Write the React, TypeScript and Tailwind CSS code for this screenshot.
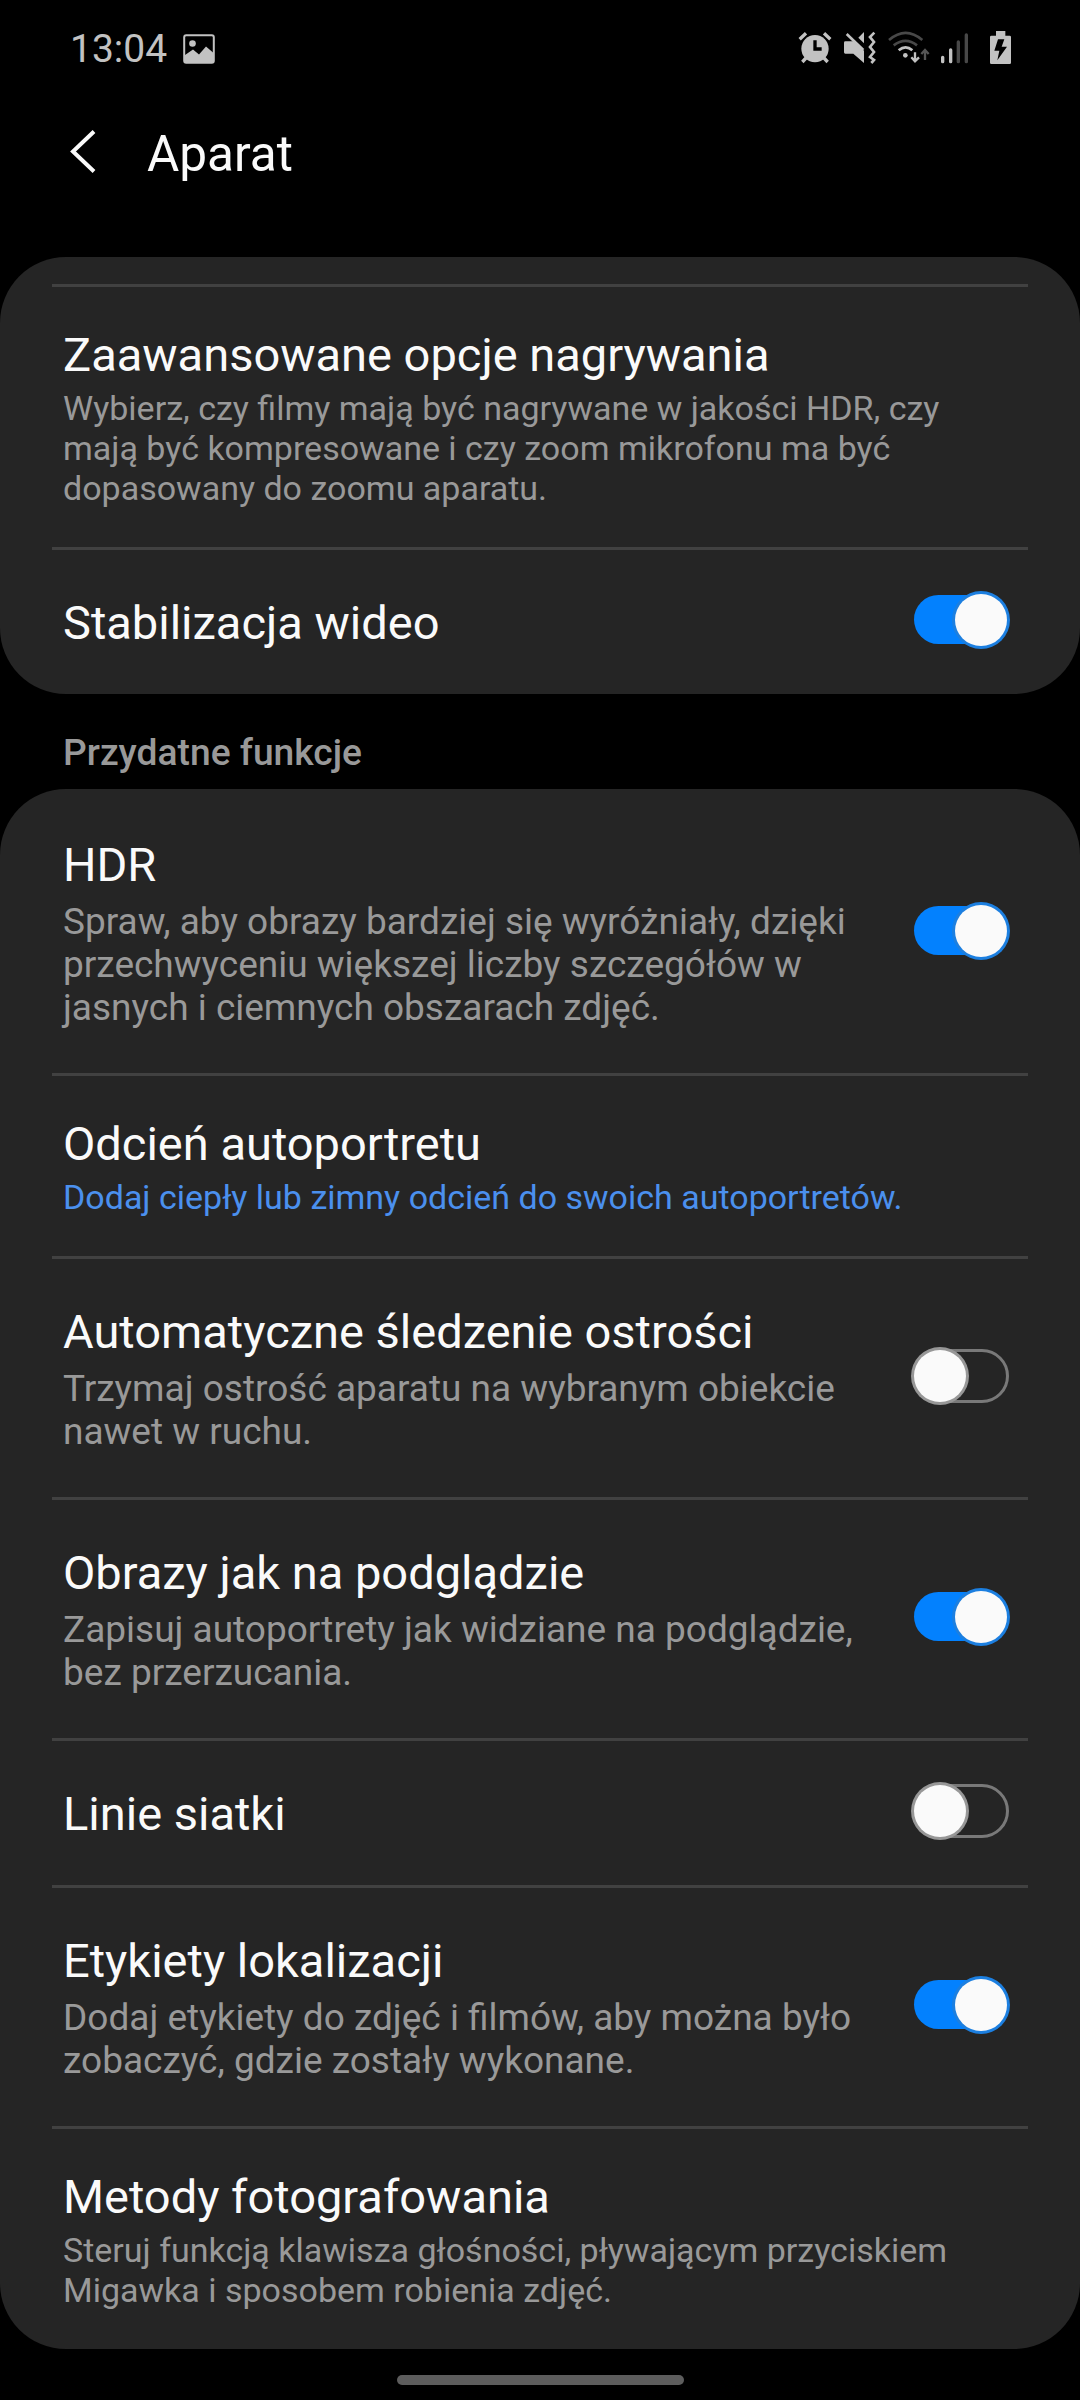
import { useState } from 'react'
import { clsx } from 'clsx'

type Item = {
  id: string
  title: string
  lines?: string[]
  accent?: boolean
  on?: boolean
}

const videoItems: Item[] = [
  {
    id: 'recording',
    title: 'Zaawansowane opcje nagrywania',
    lines: [
      'Wybierz, czy filmy mają być nagrywane w jakości HDR, czy',
      'mają być kompresowane i czy zoom mikrofonu ma być',
      'dopasowany do zoomu aparatu.',
    ],
  },
  { id: 'stabilization', title: 'Stabilizacja wideo', on: true },
]

const usefulItems: Item[] = [
  {
    id: 'hdr',
    title: 'HDR',
    lines: [
      'Spraw, aby obrazy bardziej się wyróżniały, dzięki',
      'przechwyceniu większej liczby szczegółów w',
      'jasnych i ciemnych obszarach zdjęć.',
    ],
    on: true,
  },
  {
    id: 'selfie-tone',
    title: 'Odcień autoportretu',
    lines: ['Dodaj ciepły lub zimny odcień do swoich autoportretów.'],
    accent: true,
  },
  {
    id: 'tracking',
    title: 'Automatyczne śledzenie ostrości',
    lines: ['Trzymaj ostrość aparatu na wybranym obiekcie', 'nawet w ruchu.'],
    on: false,
  },
  {
    id: 'preview',
    title: 'Obrazy jak na podglądzie',
    lines: ['Zapisuj autoportrety jak widziane na podglądzie,', 'bez przerzucania.'],
    on: true,
  },
  { id: 'grid', title: 'Linie siatki', on: false },
  {
    id: 'location',
    title: 'Etykiety lokalizacji',
    lines: ['Dodaj etykiety do zdjęć i filmów, aby można było', 'zobaczyć, gdzie zostały wykonane.'],
    on: true,
  },
  {
    id: 'shooting',
    title: 'Metody fotografowania',
    lines: ['Steruj funkcją klawisza głośności, pływającym przyciskiem', 'Migawka i sposobem robienia zdjęć.'],
  },
]

export default function App() {
  return (
    <div className="flex h-[2400px] w-[1080px] flex-col overflow-hidden bg-black font-['Roboto',sans-serif] text-[#fafafa]">
      <StatusBar />
      <header className="flex h-[162px] items-start pt-[29px] pl-[69px]">
        <button aria-label="Wstecz" className="mt-[5px] h-[44px] w-[28px]">
          <svg viewBox="0 0 28 44" className="h-[44px] w-[28px]" fill="none" stroke="currentColor" strokeWidth="4">
            <path d="M25 2.5 4 22.5 25 42.5" />
          </svg>
        </button>
        <h1 className="ml-[50px] text-[49.5px] leading-[60px]">Aparat</h1>
      </header>

      <main className="flex flex-col">
        <section className="rounded-[66px] bg-[#252525] pt-[27px]">
          <Divider />
          <ItemList items={videoItems} />
        </section>
        <h2 className="h-[95px] pt-[36px] pl-[63px] text-[37.2px] leading-[44px] font-medium text-[#999999]">
          Przydatne funkcje
        </h2>
        <section className="rounded-[66px] bg-[#252525] pt-[3px]">
          <ItemList items={usefulItems} />
        </section>
      </main>

      <div className="mt-[26px] h-[10px] w-[287px] self-center rounded-full bg-[#5d5d5d]" />
    </div>
  )
}

function ItemList({ items }: { items: Item[] }) {
  return (
    <>
      {items.map((item, i) => (
        <div key={item.id}>
          {i > 0 && <Divider />}
          {item.on === undefined ? <LinkRow item={item} /> : <SwitchRow item={item} />}
        </div>
      ))}
    </>
  )
}

function Divider() {
  return <div className="mx-[52px] h-[3px] bg-[#414141]" />
}

function LinkRow({ item }: { item: Item }) {
  return (
    <div className="px-[63px] pt-[40px] pb-[39px]">
      <h3 className="text-[47px] leading-[56px]">{item.title}</h3>
      <p
        className={clsx(
          'mt-[5px] text-[34px] leading-[40px] whitespace-nowrap',
          item.accent ? 'text-[#4b90ee]' : 'text-[#999999]'
        )}
      >
        {item.lines?.map(line => <span key={line} className="block">{line}</span>)}
      </p>
    </div>
  )
}

function SwitchRow({ item }: { item: Item }) {
  const [on, setOn] = useState(!!item.on)

  return (
    <div className="flex items-center justify-between pt-[45px] pr-[68px] pb-[43px] pl-[63px]">
      <div>
        <h3 className="text-[47px] leading-[56px]">{item.title}</h3>
        {item.lines && (
          <p className="mt-[7px] mb-px text-[37px] leading-[43px] whitespace-nowrap text-[#999999]">
            {item.lines.map(line => <span key={line} className="block">{line}</span>)}
          </p>
        )}
      </div>
      <Toggle label={item.title} on={on} onChange={() => setOn(!on)} />
    </div>
  )
}

function Toggle({ label, on, onChange }: { label: string; on: boolean; onChange: () => void }) {
  return (
    <button
      role="switch"
      aria-checked={on}
      aria-label={label}
      onClick={onChange}
      className="-mt-3.5 -mb-2 h-[58px] w-[101px] shrink-0"
    >
      <svg viewBox="0 0 101 58" className="block h-[58px] w-[101px]">
        {on ? (
          <>
            <rect x="3" y="4" width="92" height="49" rx="24.5" fill="#0381fe" />
            <circle cx="70" cy="29" r="29" fill="#1c7fe0" />
            <circle cx="70" cy="29" r="26" fill="#fafafa" />
          </>
        ) : (
          <>
            <rect x="6" y="3.5" width="90.5" height="51" rx="25.5" fill="none" stroke="#797979" strokeWidth="3" />
            <circle cx="29" cy="29" r="29" fill="#979797" />
            <circle cx="29" cy="29" r="26" fill="#fafafa" />
          </>
        )}
      </svg>
    </button>
  )
}

function StatusBar() {
  return (
    <div className="flex h-[95px] items-start justify-between pr-[68px] pl-[70px] text-[#c2c2c2]">
      <div className="flex items-start pt-[26px]">
        <span className="text-[39px] leading-[46px]">13:04</span>
        <svg viewBox="0 0 32 30" className="mt-[8px] ml-[16px] h-[30px] w-[32px]">
          <rect x="1.2" y="1.2" width="29.6" height="27.6" rx="2" fill="none" stroke="currentColor" strokeWidth="2" />
          <circle cx="9.5" cy="9.5" r="3.3" fill="currentColor" />
          <path d="M2 21 10 15.500 16 20.500 23 12.500 30 18.500V28H2Z" fill="currentColor" />
        </svg>
      </div>
      <div className="flex items-start pt-[30px]">
        <AlarmIcon />
        <MutedIcon />
        <WifiIcon />
        <SignalIcon />
        <BatteryIcon />
      </div>
    </div>
  )
}

function AlarmIcon() {
  return (
    <svg viewBox="54 45 102 105" className="h-[35px] w-[34px]" stroke="currentColor">
      <circle cx="105" cy="101" r="41" fill="currentColor" stroke="none" />
      <path d="M59 73 78 55M132 55l19 18" strokeWidth="10" fill="none" />
      <path d="M78 129 67 141M132 129l11 12" strokeWidth="10" fill="none" />
      <path d="M105 76v26h20" stroke="#000" strokeWidth="10" fill="none" />
    </svg>
  )
}

function MutedIcon() {
  return (
    <svg viewBox="189 45 102 105" className="ml-[11px] h-[35px] w-[34px]" fill="currentColor">
      <path d="M196 79h26l30 28v37l-32-28h-24q-4 0-4-4V83q0-4 4-4Z" />
      <path d="M252 51v34l-17-17Z" />
      <path d="M200 57 250 105" fill="none" stroke="currentColor" strokeWidth="8" />
      <path d="M283 53 270 66l12 15-12 15 12 15-12 15 12 9-8 9" fill="none" stroke="currentColor" strokeWidth="8" />
    </svg>
  )
}

function WifiIcon() {
  return (
    <svg viewBox="321 45 129 105" className="ml-[10px] h-[35px] w-[43px]" fill="none" strokeWidth="8">
      <path d="M327 75Q377 32 427 75M341 91Q377 64 411 91" stroke="#484848" />
      <path d="M356 106Q377 88 397 106" stroke="currentColor" />
      <circle cx="376" cy="121" r="7" fill="currentColor" />
      <path d="M405 112v28M394 127l11 12 12-12" stroke="currentColor" strokeWidth="7" />
      <path d="M435 135v-30M424 117l11-12 11 12" stroke="#555555" strokeWidth="7" />
    </svg>
  )
}

function SignalIcon() {
  return (
    <svg viewBox="480 45 87 105" className="ml-[10px] h-[35px] w-[29px]" strokeWidth="10" strokeLinecap="round">
      <path d="M488 127v13M512 105v35" stroke="currentColor" />
      <path d="M535 81v59M559 60v80" stroke="#484848" />
    </svg>
  )
}

function BatteryIcon() {
  return (
    <svg viewBox="627 45 69 105" className="ml-[20px] h-[35px] w-[23px]">
      <path d="M648 48h28v14h13q4 0 4 4v77q0 4-4 4h-55q-4 0-4-4V66q0-4 4-4h14Z" fill="currentColor" />
      <path d="M654 73h19l-8 22h16l-29 41 6-29h-15Z" fill="#000" />
    </svg>
  )
}
